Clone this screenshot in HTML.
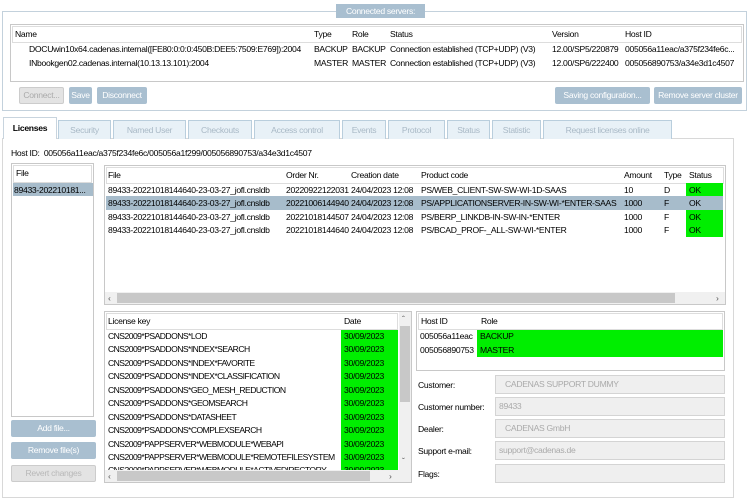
<!DOCTYPE html>
<html><head><meta charset="utf-8"><style>
*{box-sizing:border-box;margin:0;padding:0}
body{width:750px;height:490px;background:#fff;font-family:"Liberation Sans",sans-serif;font-size:8.6px;letter-spacing:-0.3px;color:#000;position:relative;overflow:hidden}
.a{position:absolute;white-space:nowrap}
.k{letter-spacing:-0.55px}
.box{position:absolute;border:1px solid #c8d4de}
.btn{position:absolute;background:#a9bfd0;color:#fff;border-radius:2px;text-align:center;line-height:17px;height:17px}
.btn.dis{background:#e3e3e3;color:#aaa;border:1px solid #ccc;line-height:15px}
.tab{position:absolute;top:120px;height:19px;border:1px solid #b9cedd;border-bottom:none;background:#e8f1f7;color:#a9b9c6;text-align:center;line-height:18px}
.tbl{position:absolute;border:1px solid #c8c8c8;background:#fff;overflow:hidden}
.hd{position:absolute;left:1px;right:1px;top:1px;border:1px solid #ddd;background:#fff}
.g{position:absolute;background:#00ee00}
.sel{position:absolute;background:#a7bccb}
.fld{position:absolute;left:495px;width:230px;height:19px;background:#efefef;border:1px solid #d4d4d4;color:#aaa;padding-left:9px;line-height:17px}
.lbl{position:absolute;left:418px}
.sb{position:absolute;background:#f0f0f0}
.th{position:absolute;background:#c8c8c8}
</style></head><body>

<div class="box" style="left:2px;top:11px;width:745px;height:100px;border-color:#c3d1dc"></div>
<div class="a" style="left:336px;top:4px;width:89px;height:14px;background:#a9bfd0;color:#fff;text-align:center;line-height:14px">Connected servers:</div>
<div class="tbl" style="left:10px;top:24px;width:734px;height:58px">
 <div class="hd" style="height:17px"></div>
</div>
<div class="a" style="left:15px;top:29px">Name</div>
<div class="a" style="left:314px;top:29px">Type</div>
<div class="a" style="left:352px;top:29px">Role</div>
<div class="a" style="left:390px;top:29px">Status</div>
<div class="a" style="left:552px;top:29px">Version</div>
<div class="a" style="left:625px;top:29px">Host ID</div>
<div class="a" style="left:29px;top:44px">DOCUwin10x64.cadenas.internal([FE80:0:0:0:450B:DEE5:7509:E769]):2004</div>
<div class="a" style="left:314px;top:44px">BACKUP</div>
<div class="a" style="left:352px;top:44px">BACKUP</div>
<div class="a" style="left:390px;top:44px">Connection established (TCP+UDP) (V3)</div>
<div class="a" style="left:552px;top:44px">12.00/SP5/220879</div>
<div class="a" style="left:625px;top:44px">005056a11eac/a375f234fe6c...</div>
<div class="a" style="left:29px;top:58px">INbookgen02.cadenas.internal(10.13.13.101):2004</div>
<div class="a" style="left:314px;top:58px">MASTER</div>
<div class="a" style="left:352px;top:58px">MASTER</div>
<div class="a" style="left:390px;top:58px">Connection established (TCP+UDP) (V3)</div>
<div class="a" style="left:552px;top:58px">12.00/SP6/222400</div>
<div class="a" style="left:625px;top:58px">005056890753/a34e3d1c4507</div>

<div class="btn dis" style="left:19px;top:87px;width:45px">Connect...</div>
<div class="btn" style="left:69px;top:87px;width:23px">Save</div>
<div class="btn" style="left:97px;top:87px;width:50px">Disconnect</div>
<div class="btn" style="left:555px;top:87px;width:95px">Saving configuration...</div>
<div class="btn" style="left:654px;top:87px;width:88px">Remove server cluster</div>

<div class="box" style="left:2px;top:138px;width:732px;height:360px;border-color:#d8d8d8"></div>
<div class="tab" style="left:3px;top:117px;width:54px;height:22px;background:#fff;color:#000;font-weight:bold;border-color:#c8d4de;line-height:20px">Licenses</div>
<div class="tab" style="left:58px;width:53px">Security</div>
<div class="tab" style="left:113px;width:73px">Named User</div>
<div class="tab" style="left:188px;width:64px">Checkouts</div>
<div class="tab" style="left:254px;width:86px">Access control</div>
<div class="tab" style="left:342px;width:44px">Events</div>
<div class="tab" style="left:388px;width:57px">Protocol</div>
<div class="tab" style="left:447px;width:43px">Status</div>
<div class="tab" style="left:492px;width:49px">Statistic</div>
<div class="tab" style="left:543px;width:129px">Request licenses online</div>

<div class="a" style="left:11px;top:148px">Host ID:&nbsp; 005056a11eac/a375f234fe6c/005056a1f299/005056890753/a34e3d1c4507</div>

<div class="tbl" style="left:11px;top:163px;width:83px;height:254px"><div class="hd" style="height:18px"></div></div>
<div class="a" style="left:16px;top:168px">File</div>
<div class="sel" style="left:13px;top:183px;width:80px;height:13px"></div>
<div class="a" style="left:14px;top:185px">89433-202210181...</div>

<div class="btn" style="left:11px;top:420px;width:85px">Add file...</div>
<div class="btn" style="left:11px;top:442px;width:85px">Remove file(s)</div>
<div class="btn dis" style="left:11px;top:465px;width:85px;color:#b8b8b8">Revert changes</div>

<div class="tbl" style="left:104px;top:165px;width:622px;height:140px"><div class="hd" style="height:17px"></div></div>
<div class="sel" style="left:106px;top:196px;width:580px;height:14px"></div>
<div class="sel" style="left:686px;top:196px;width:37px;height:14px"></div>
<div class="g" style="left:686px;top:183px;width:37px;height:13px"></div>
<div class="g" style="left:686px;top:210px;width:37px;height:27px"></div>
<div class="a" style="left:108px;top:170px">File</div>
<div class="a" style="left:286px;top:170px">Order Nr.</div>
<div class="a" style="left:351px;top:170px">Creation date</div>
<div class="a" style="left:421px;top:170px">Product code</div>
<div class="a" style="left:624px;top:170px">Amount</div>
<div class="a" style="left:664px;top:170px">Type</div>
<div class="a" style="left:689px;top:170px">Status</div>
<div class="a" style="left:108px;top:185px">89433-20221018144640-23-03-27_jofl.cnsldb</div><div class="a" style="left:286px;top:185px">20220922122031</div><div class="a" style="left:351px;top:185px">24/04/2023 12:08</div><div class="a" style="left:421px;top:185px">PS/WEB_CLIENT-SW-SW-WI-1D-SAAS</div><div class="a" style="left:624px;top:185px">10</div><div class="a" style="left:664px;top:185px">D</div><div class="a" style="left:689px;top:185px">OK</div>
<div class="a" style="left:108px;top:198px">89433-20221018144640-23-03-27_jofl.cnsldb</div><div class="a" style="left:286px;top:198px">20221006144940</div><div class="a" style="left:351px;top:198px">24/04/2023 12:08</div><div class="a" style="left:421px;top:198px">PS/APPLICATIONSERVER-IN-SW-WI-*ENTER-SAAS</div><div class="a" style="left:624px;top:198px">1000</div><div class="a" style="left:664px;top:198px">F</div><div class="a" style="left:689px;top:198px">OK</div>
<div class="a" style="left:108px;top:212px">89433-20221018144640-23-03-27_jofl.cnsldb</div><div class="a" style="left:286px;top:212px">20221018144507</div><div class="a" style="left:351px;top:212px">24/04/2023 12:08</div><div class="a" style="left:421px;top:212px">PS/BERP_LINKDB-IN-SW-IN-*ENTER</div><div class="a" style="left:624px;top:212px">1000</div><div class="a" style="left:664px;top:212px">F</div><div class="a" style="left:689px;top:212px">OK</div>
<div class="a" style="left:108px;top:225px">89433-20221018144640-23-03-27_jofl.cnsldb</div><div class="a" style="left:286px;top:225px">20221018144640</div><div class="a" style="left:351px;top:225px">24/04/2023 12:08</div><div class="a" style="left:421px;top:225px">PS/BCAD_PROF-_ALL-SW-WI-*ENTER</div><div class="a" style="left:624px;top:225px">1000</div><div class="a" style="left:664px;top:225px">F</div><div class="a" style="left:689px;top:225px">OK</div>
<div class="sb" style="left:105px;top:292px;width:620px;height:12px"></div>
<div class="th" style="left:117px;top:293px;width:558px;height:10px"></div>
<div class="a" style="left:108px;top:293px;color:#555">&lsaquo;</div>
<div class="a" style="left:716px;top:293px;color:#555">&rsaquo;</div>

<div class="tbl" style="left:104px;top:311px;width:308px;height:172px"><div class="hd" style="height:17px;right:13px"></div></div>
<div class="a" style="left:108px;top:316px">License key</div>
<div class="a" style="left:344px;top:316px">Date</div>
<div class="g" style="left:341px;top:330px;width:57px;height:140px"></div>
<div class="a k" style="left:108px;top:331px">CNS2009*PSADDONS*LOD</div><div class="a" style="left:344px;top:331px">30/09/2023</div>
<div class="a k" style="left:108px;top:344px">CNS2009*PSADDONS*INDEX*SEARCH</div><div class="a" style="left:344px;top:344px">30/09/2023</div>
<div class="a k" style="left:108px;top:358px">CNS2009*PSADDONS*INDEX*FAVORITE</div><div class="a" style="left:344px;top:358px">30/09/2023</div>
<div class="a k" style="left:108px;top:371px">CNS2009*PSADDONS*INDEX*CLASSIFICATION</div><div class="a" style="left:344px;top:371px">30/09/2023</div>
<div class="a k" style="left:108px;top:385px">CNS2009*PSADDONS*GEO_MESH_REDUCTION</div><div class="a" style="left:344px;top:385px">30/09/2023</div>
<div class="a k" style="left:108px;top:398px">CNS2009*PSADDONS*GEOMSEARCH</div><div class="a" style="left:344px;top:398px">30/09/2023</div>
<div class="a k" style="left:108px;top:412px">CNS2009*PSADDONS*DATASHEET</div><div class="a" style="left:344px;top:412px">30/09/2023</div>
<div class="a k" style="left:108px;top:425px">CNS2009*PSADDONS*COMPLEXSEARCH</div><div class="a" style="left:344px;top:425px">30/09/2023</div>
<div class="a k" style="left:108px;top:439px">CNS2009*PAPPSERVER*WEBMODULE*WEBAPI</div><div class="a" style="left:344px;top:439px">30/09/2023</div>
<div class="a k" style="left:108px;top:452px">CNS2009*PAPPSERVER*WEBMODULE*REMOTEFILESYSTEM</div><div class="a" style="left:344px;top:452px">30/09/2023</div>
<div class="a k" style="left:108px;top:465px">CNS2009*PAPPSERVER*WEBMODULE*ACTIVEDIRECTORY</div><div class="a" style="left:344px;top:465px">30/09/2023</div>
<div class="sb" style="left:399px;top:312px;width:12px;height:158px"></div>
<div class="th" style="left:400px;top:326px;width:10px;height:76px"></div>
<div class="a" style="left:402px;top:314px;color:#555">&#710;</div>
<div class="a" style="left:402px;top:456px;color:#555">&#711;</div>
<div class="sb" style="left:105px;top:470px;width:306px;height:12px"></div>
<div class="th" style="left:117px;top:471px;width:253px;height:10px"></div>
<div class="a" style="left:108px;top:471px;color:#555">&lsaquo;</div>
<div class="a" style="left:389px;top:471px;color:#555">&rsaquo;</div>

<div class="tbl" style="left:416px;top:311px;width:309px;height:60px"><div class="hd" style="height:17px"></div></div>
<div class="a" style="left:421px;top:316px">Host ID</div>
<div class="a" style="left:481px;top:316px">Role</div>
<div class="g" style="left:477px;top:330px;width:246px;height:27px"></div>
<div class="a" style="left:420px;top:331px">005056a11eac</div><div class="a" style="left:480px;top:331px">BACKUP</div>
<div class="a" style="left:420px;top:345px">005056890753</div><div class="a" style="left:480px;top:345px">MASTER</div>

<div class="lbl" style="top:380px">Customer:</div>
<div class="fld" style="top:375px">CADENAS SUPPORT DUMMY</div>
<div class="lbl" style="top:402px">Customer number:</div>
<div class="fld" style="top:397px;padding-left:3px">89433</div>
<div class="lbl" style="top:424px">Dealer:</div>
<div class="fld" style="top:419px">CADENAS GmbH</div>
<div class="lbl" style="top:446px">Support e-mail:</div>
<div class="fld" style="top:441px;padding-left:3px">support@cadenas.de</div>
<div class="lbl" style="top:469px">Flags:</div>
<div class="fld" style="top:464px"></div>
</body></html>
